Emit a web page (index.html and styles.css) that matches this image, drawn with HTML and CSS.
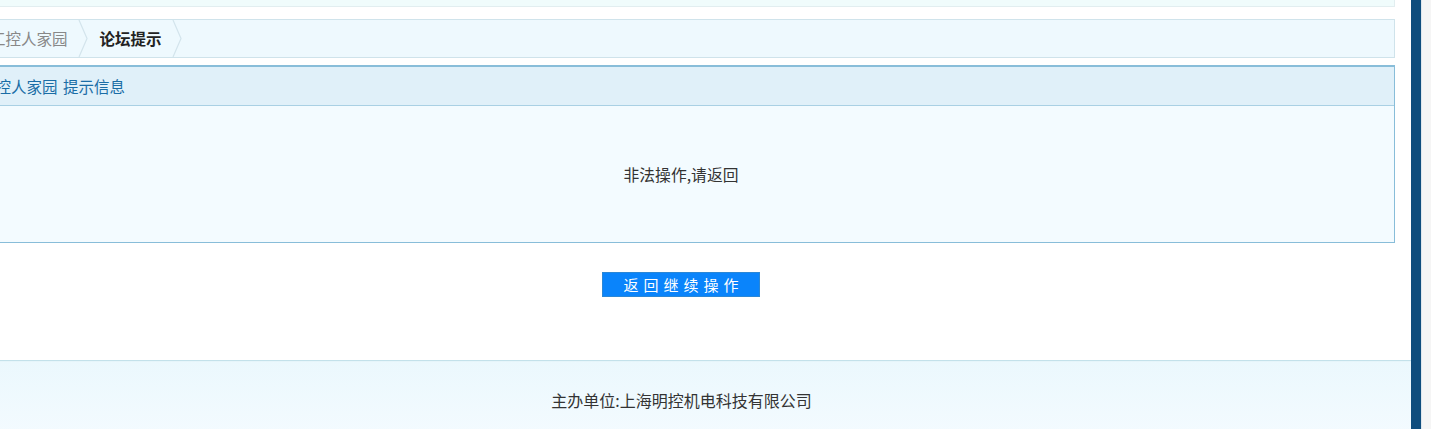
FILE: index.html
```
<!DOCTYPE html>
<html lang="zh-CN">
<head>
    <meta charset="UTF-8">
    <title>论坛提示</title>
    <link rel="stylesheet" href="styles.css">
</head>
<body>
<div class="page">
  <div class="main">
    <div class="wrap">
      <div class="topbar"></div>

      <div class="crumbs">
        <a class="crumb home" href="#">工控人家园</a>
        <svg class="sep" width="12" height="37" viewBox="0 0 12 37"><polyline points="1,0 9,18.5 1,37" fill="none" stroke="#d3e4ec" stroke-width="1.2"/></svg>
        <span class="crumb current">论坛提示</span>
        <svg class="sep" width="12" height="37" viewBox="0 0 12 37"><polyline points="1,0 9,18.5 1,37" fill="none" stroke="#d3e4ec" stroke-width="1.2"/></svg>
      </div>

      <div class="box">
        <div class="box-head">工控人家园 提示信息</div>
        <div class="box-body">非法操作,请返回</div>
      </div>

      <div class="actions">
        <button class="back">返回继续操作</button>
      </div>
    </div>

    <div class="footer">主办单位:上海明控机电科技有限公司</div>
  </div>
  <div class="sidebar"></div>
  <div class="scroll"></div>
</div>
</body>
</html>
```

FILE: styles.css
```
html, body {
margin: 0;
padding: 0;
overflow: hidden;
}

body {
font-family: "Noto Sans CJK SC", "Noto Sans", sans-serif;
font-size: 15px;
color: #333;
background: #fff;
}

.page {
display: flex;
height: 429px;
}

.main {
flex: 1;
overflow: hidden;
}

.sidebar {
width: 10px;
background: #0f4d7d;
border-right: 1px solid #dfe6ec;
}

.scroll {
width: 9px;
background: #f5f5f5;
}

.wrap {
margin-left: -33px;
width: 1428px;
}

.topbar {
height: 6px;
background: #f0fcfc;
border: 1px solid #e2eef0;
border-top: none;
}

.crumbs {
display: flex;
align-items: center;
height: 37px;
margin-top: 12px;
background: #eef9fe;
border: 1px solid #cfe3eb;
}

.crumb {
font-size: 15.5px;
line-height: 37px;
text-decoration: none;
}

.crumb.home {
color: #888;
padding-left: 22px;
padding-right: 10px;
}

.crumb.current {
color: #222;
font-weight: bold;
padding: 0 10px;
}

.sep {
display: block;
}

.box {
margin-top: 7px;
border: 1px solid #88bdd9;
border-top-width: 2px;
}

.box-head {
height: 38px;
line-height: 38px;
padding-left: 12px;
font-size: 15.5px;
color: #1a6da6;
background: #e0f0f9;
border-bottom: 1px solid #a9d0e4;
word-spacing: 2px;
}

.box-body {
height: 136px;
display: flex;
align-items: center;
justify-content: center;
font-size: 15.8px;
color: #333;
background: #f3fbff;
}

.actions {
text-align: center;
padding-top: 29px;
height: 88px;
}

.back {
width: 158px;
height: 25px;
padding: 0 0 0 5px;
font-family: "Noto Sans CJK SC", sans-serif;
font-size: 15px;
letter-spacing: 5px;
line-height: 23px;
color: #fff;
background: #0a84fb;
border: 1px solid #2b87d6;
cursor: pointer;
}

.footer {
border-top: 1px solid #c3e1ea;
box-shadow: inset 0 1px 0 #e6f5fa;
height: 80px;
padding: 28px 48px 0 0;
box-sizing: border-box;
text-align: center;
font-size: 16px;
line-height: 22px;
color: #333;
background: linear-gradient(#ebf8fd, #f4fbff);
}
```
